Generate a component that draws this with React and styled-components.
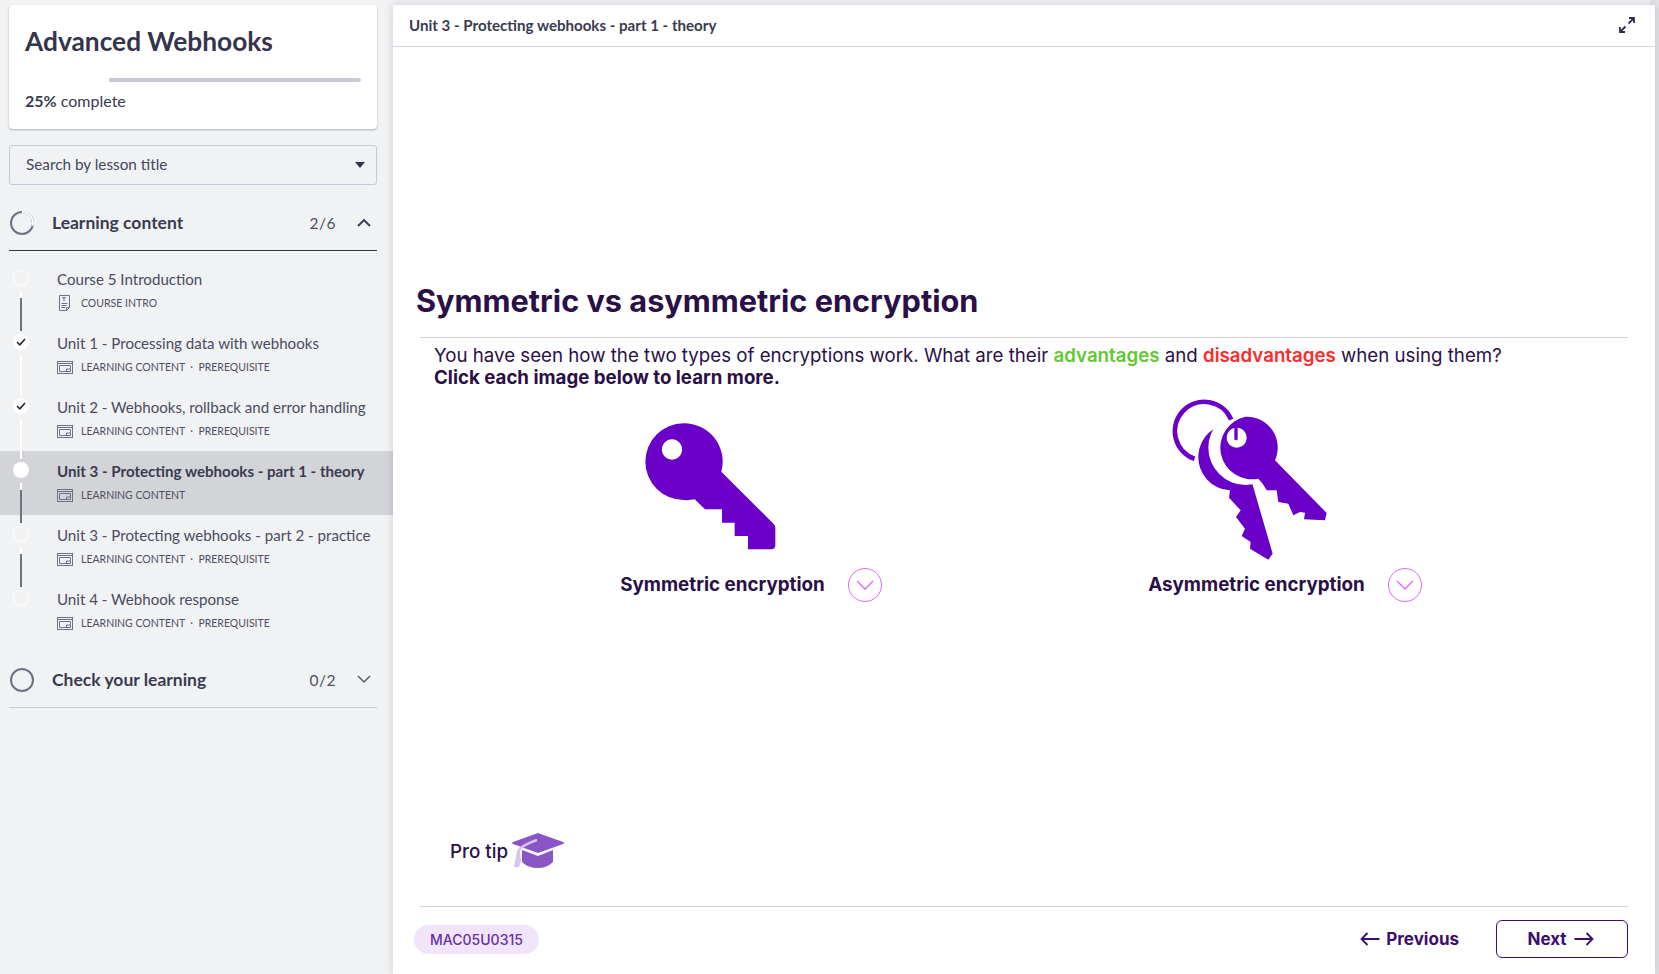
import React from "react";
import styled, { createGlobalStyle } from "styled-components";

const Global = createGlobalStyle`
  html, body { margin: 0; padding: 0; height: 100%; overflow: hidden; background: #e2e3e6; }
  #root { height: 100%; }
  * { box-sizing: border-box; }
`;

const SIDE = `Lato, "Noto Sans", sans-serif`;
const MAIN = `Inter, "Liberation Sans", sans-serif`;

const Page = styled.div`
  display: flex;
  height: 974px;
  width: 1659px;
  padding-right: 4px;
  background: linear-gradient(90deg, #f1f2f4 0, #f1f2f4 1650px, #e2e3e6 1650px);
  font-family: ${SIDE};
  color: #3a3b50;
`;

const Sidebar = styled.aside`
  width: 393px;
  flex: none;
  padding-top: 5px;
`;

const CourseCard = styled.section`
  margin: 0 16px 16px 9px;
  height: 124px;
  background: #fff;
  border-radius: 4px;
  box-shadow: 0 1px 2px rgba(40, 42, 70, 0.35);
  padding: 17px 16px 0;
`;

const CourseTitle = styled.h1`
  margin: 0;
  font-size: 26.3px;
  line-height: 38px;
  font-weight: 700;
  color: #34354c;
`;

const Progress = styled.div`
  margin-top: 18px;
  height: 4px;
  border-radius: 2px;
  background: linear-gradient(90deg, #fff 25%, #c7c9d6 25%);
`;

const ProgressLabel = styled.div`
  margin-top: 8px;
  font-size: 16px;
  line-height: 22px;
  b { font-weight: 700; }
`;

const SearchBox = styled.div`
  margin: 0 16px 10px 9px;
  height: 40px;
  border: 1px solid #c7c9d6;
  border-radius: 3px;
  display: flex;
  align-items: center;
  justify-content: space-between;
  padding: 0 11px 2px 16px;
  font-size: 15.3px;
  color: #45465a;
`;

const Caret = styled.span`
  width: 0;
  height: 0;
  margin-top: 2px;
  border-left: 5.5px solid transparent;
  border-right: 5.5px solid transparent;
  border-top: 6px solid #34354b;
`;

const SectionHeader = styled.div`
  margin: 0 16px 0 9px;
  height: 56px;
  display: flex;
  align-items: center;
  border-bottom: 1px solid ${(p) => (p.$open ? "#34354b" : "#c7c9d6")};
  padding-right: 6px;
`;

const SectionRing = styled.svg`
  width: 26px;
  height: 26px;
  flex: none;
`;

const SectionTitle = styled.span`
  margin-left: 17px;
  flex: 1;
  font-size: 17.5px;
  font-weight: 700;
  color: #3a3b50;
`;

const SectionCount = styled.span`
  font-size: 15.5px;
  letter-spacing: 0.5px;
  color: #4f5062;
  margin-right: 21px;
`;

const Chevron = styled.svg`
  width: 14px;
  height: 9px;
  flex: none;
`;

const LessonList = styled.div`
  padding-top: 8px;
  padding-bottom: 9px;
`;

const LessonRow = styled.div`
  height: 64px;
  display: flex;
  padding-left: 13px;
  background: ${(p) => (p.$active ? "#d3d4d8" : "transparent")};
`;

const Rail = styled.div`
  width: 16px;
  flex: none;
  display: flex;
  flex-direction: column;
  align-items: center;
  padding-top: 11px;
  position: relative;
  z-index: 1;
`;

const Dot = styled.span`
  width: 16px;
  height: 16px;
  border-radius: 50%;
  flex: none;
  background: ${(p) => (p.$solid ? "#fff" : "transparent")};
  border: ${(p) => (p.$solid ? "none" : "1px solid #fff")};
  display: flex;
  align-items: center;
  justify-content: center;
`;

const Connector = styled.span`
  width: 2px;
  height: 40px;
  margin-top: 5px;
  flex: none;
  background: ${(p) =>
    p.$done ? "#fff" : "linear-gradient(#fff 0, #fff 7px, #6f7084 7px)"};
`;

const LessonBody = styled.div`
  margin-left: 28px;
  padding-top: 9px;
  min-width: 0;
`;

const LessonTitle = styled.div`
  font-size: 15.1px;
  line-height: 22px;
  white-space: nowrap;
  font-weight: ${(p) => (p.$active ? 700 : 400)};
  color: ${(p) => (p.$active ? "#3a3b50" : "#4a4b60")};
`;

const LessonMeta = styled.div`
  margin-top: 5px;
  display: flex;
  align-items: center;
  gap: 8px;
  font-size: 10.5px;
  line-height: 16px;
  color: #4f5062;
  white-space: pre;
`;

const Main = styled.main`
  flex: 1;
  margin-top: 5px;
  background: #fff;
  box-shadow: 0 0 8px rgba(40, 42, 70, 0.18);
  display: flex;
  flex-direction: column;
  min-width: 0;
`;

const TopBar = styled.header`
  height: 42px;
  flex: none;
  display: flex;
  align-items: center;
  justify-content: space-between;
  padding: 0 20px 2px 16px;
  border-bottom: 1px solid #d3d4da;
  font-size: 15.1px;
  font-weight: 700;
  color: #3a3b50;
`;

const Content = styled.div`
  flex: 1;
  display: flex;
  flex-direction: column;
  padding: 234px 27px 0 23px;
  font-family: ${MAIN};
  color: #2a1047;
`;

const Heading = styled.h2`
  margin: 0;
  font-size: 30.7px;
  line-height: 40px;
  font-weight: 700;
  white-space: nowrap;
`;

const Rule = styled.hr`
  margin: ${(p) => p.$margin || "0"};
  border: 0;
  border-top: 1px solid #d5cfd3;
  height: 0;
`;

const Intro = styled.p`
  margin: 0 0 0 18px;
  font-size: 18.7px;
  line-height: 22px;
  white-space: nowrap;
  b { font-weight: 700; }
`;

const Good = styled.span`
  color: #5fc92e;
  font-weight: 600;
`;

const Bad = styled.span`
  color: #ff2a2a;
  font-weight: 600;
`;

const Choices = styled.div`
  width: 1068px;
  margin: 8px auto 0 68px;
  display: grid;
  grid-template-columns: 1fr 1fr;
  align-items: end;
`;

const Choice = styled.div`
  display: flex;
  flex-direction: column;
  align-items: center;
`;

const KeyArt = styled.svg`
  display: block;
  width: ${(p) => p.$w}px;
  height: ${(p) => p.$h}px;
  margin-right: ${(p) => p.$shift}px;
  margin-bottom: ${(p) => p.$below}px;
`;

const Caption = styled.div`
  display: flex;
  align-items: center;
  gap: 23px;
  height: 34px;
`;

const CaptionText = styled.span`
  font-size: 18.8px;
  font-weight: 700;
  position: relative;
  top: -1px;
`;

const RoundToggle = styled.span`
  width: 34px;
  height: 34px;
  border-radius: 50%;
  border: 1.5px solid #e066ff;
  display: flex;
  align-items: center;
  justify-content: center;
`;

const ProTip = styled.div`
  margin: auto 0 37px 34px;
  height: 36px;
  display: flex;
  align-items: center;
  gap: 4px;
  font-size: 18.8px;
  font-weight: 500;
`;

const Footer = styled.footer`
  flex: none;
  height: 68px;
  display: flex;
  flex-direction: column;
  font-family: ${MAIN};
  padding-right: 27px;
`;

const FooterRow = styled.div`
  display: flex;
  align-items: center;
  justify-content: space-between;
  padding: 13px 0 0 21px;
`;

const CodePill = styled.span`
  height: 29px;
  width: 125px;
  border-radius: 15px;
  background: #f0e5fb;
  color: #6a2ea5;
  font-size: 14px;
  font-weight: 500;
  display: flex;
  align-items: center;
  justify-content: center;
`;

const Nav = styled.div`
  display: flex;
  align-items: center;
  gap: 37px;
`;

const NavButton = styled.button`
  height: 38px;
  width: ${(p) => (p.$outlined ? "132px" : "auto")};
  padding: ${(p) => (p.$outlined ? "0 3px 0 0" : "0")};
  background: transparent;
  border: ${(p) => (p.$outlined ? "1.5px solid #3d0e6f" : "none")};
  border-radius: 6px;
  display: flex;
  align-items: center;
  justify-content: center;
  gap: ${(p) => (p.$outlined ? "7px" : "6px")};
  color: #3d0e6f;
  font-family: ${MAIN};
  font-size: 17px;
  font-weight: 700;
`;

const ArrowLine = ({ dir }) => (
  <svg width="20" height="14" viewBox="0 0 20 14" fill="none" stroke="#3d0e6f" strokeWidth="1.8">
    {dir === "left" ? <path d="M19.5 7H1.5M7.5 1L1.5 7l6 6" /> : <path d="M.5 7h18M12.5 1l6 6-6 6" />}
  </svg>
);

const WindowIcon = () => (
  <svg width="16" height="13" viewBox="0 0 16 13" fill="none" stroke="#6f7084" strokeWidth="1">
    <rect x=".5" y=".5" width="15" height="12" />
    <path d="M.5 2.5h15" />
    <path d="M2.5 4.5h11v6h-11z" />
    <path d="M9.5 10.5v-2.5h4" />
  </svg>
);

const DocIcon = () => (
  <svg width="16" height="16" viewBox="0 0 16 16" fill="none" stroke="#6f7084" strokeWidth="1">
    <path d="M2.5.5h10v12l-3 3h-7z" />
    <path d="M9.5 15.5v-3h3" />
    <path d="M5 2.7h4M7 2.7v3.6M4.500 8.500h6M4.500 10.500h5M4.500 12.500h3.500" />
  </svg>
);

const Check = () => (
  <svg width="10" height="8" viewBox="0 0 10 8" fill="none" stroke="#23243a" strokeWidth="1.6">
    <path d="M1 4l2.800 2.800L9 1" />
  </svg>
);

const lessons = [
  { title: "Course 5 Introduction", kind: "COURSE INTRO", doc: true },
  { title: "Unit 1 - Processing data with webhooks", kind: "LEARNING CONTENT  ·  PREREQUISITE", check: true, done: true },
  { title: "Unit 2 - Webhooks, rollback and error handling", kind: "LEARNING CONTENT  ·  PREREQUISITE", check: true, done: true },
  { title: "Unit 3 - Protecting webhooks - part 1 - theory", kind: "LEARNING CONTENT", active: true },
  { title: "Unit 3 - Protecting webhooks - part 2 - practice", kind: "LEARNING CONTENT  ·  PREREQUISITE" },
  { title: "Unit 4 - Webhook response", kind: "LEARNING CONTENT  ·  PREREQUISITE", last: true },
];

const Lesson = ({ l }) => (
  <LessonRow $active={l.active}>
    <Rail>
      <Dot $solid={l.check || l.active}>{l.check && <Check />}</Dot>
      {!l.last && <Connector $done={l.done} />}
    </Rail>
    <LessonBody>
      <LessonTitle $active={l.active}>{l.title}</LessonTitle>
      <LessonMeta>
        {l.doc ? <DocIcon /> : <WindowIcon />}
        <span>{l.kind}</span>
      </LessonMeta>
    </LessonBody>
  </LessonRow>
);

const ToggleChevron = () => (
  <svg width="18" height="10" viewBox="0 0 18 10" fill="none" stroke="#e066ff" strokeWidth="1.3">
    <path d="M1 1l8 8 8-8" />
  </svg>
);

export default function App() {
  return (
    <Page>
      <Global />
      <Sidebar>
        <CourseCard>
          <CourseTitle>Advanced Webhooks</CourseTitle>
          <Progress />
          <ProgressLabel>
            <b>25%</b> complete
          </ProgressLabel>
        </CourseCard>
        <SearchBox>
          Search by lesson title
          <Caret />
        </SearchBox>
        <SectionHeader $open>
          <SectionRing viewBox="0 0 26 26" fill="none" strokeWidth="2">
            <circle cx="13" cy="13" r="11" stroke="#6f7084" />
            <path d="M13 2a11 11 0 0 1 10.500 14" stroke="#fff" />
          </SectionRing>
          <SectionTitle>Learning content</SectionTitle>
          <SectionCount>2/6</SectionCount>
          <Chevron viewBox="0 0 14 9" fill="none" stroke="#34354b" strokeWidth="1.8">
            <path d="M1 8l6-6 6 6" />
          </Chevron>
        </SectionHeader>
        <LessonList>
          {lessons.map((l) => (
            <Lesson key={l.title} l={l} />
          ))}
        </LessonList>
        <SectionHeader>
          <SectionRing viewBox="0 0 26 26" fill="none" strokeWidth="2">
            <circle cx="13" cy="13" r="11" stroke="#6f7084" />
          </SectionRing>
          <SectionTitle>Check your learning</SectionTitle>
          <SectionCount>0/2</SectionCount>
          <Chevron viewBox="0 0 14 9" fill="none" stroke="#5a5b6e" strokeWidth="1.5">
            <path d="M1 1l6 6 6-6" />
          </Chevron>
        </SectionHeader>
      </Sidebar>
      <Main>
        <TopBar>
          <span>Unit 3 - Protecting webhooks - part 1 - theory</span>
          <svg width="16" height="16" viewBox="0 0 16 16" fill="none" stroke="#2d2f55" strokeWidth="1.800">
            <path d="M10 1h5v5M15 1L9.500 6.500M6 15H1v-5M1 15l5.500-5.500" />
          </svg>
        </TopBar>
        <Content>
          <Heading>Symmetric vs asymmetric encryption</Heading>
          <Rule $margin="16px 0 7px 4px" />
          <Intro>
            You have seen how the two types of encryptions work. What are their <Good>advantages</Good> and{" "}
            <Bad>disadvantages</Bad> when using them?
            <br />
            <b>Click each image below to learn more.</b>
          </Intro>
          <Choices>
            <Choice>
              <KeyArt $w={136.67} $h={133.33} $shift={79} $below={15} viewBox="130 60 410 400">
                <path
                  fill="#6a00c8"
                  fillRule="evenodd"
                  d="M252 70a115 115 0 0 1 113 145L520 370q7 7 7 14v52q0 12-12 12H445V408H405V368H367V328H316L285 298a115 115 0 0 1-33 2a115 115 0 0 1 0-230zM217 118a30.500 30.500 0 1 0 .01 0z"
                />
              </KeyArt>
              <Caption>
                <CaptionText>Symmetric encryption</CaptionText>
                <RoundToggle>
                  <ToggleChevron />
                </RoundToggle>
              </Caption>
            </Choice>
            <Choice>
              <KeyArt $w={160} $h={165} $shift={70} $below={6} viewBox="120 35 480 495">
                <path
                  fill="#6a00c8"
                  d="M310 115a100 100 0 0 0-10 200l-3 22 35 38-14 20 27 35-10 22 27 18-2 20 55 33 13-18-58-199z"
                />
                <circle cx="347" cy="187" r="112" fill="#fff" />
                <path fill="#fff" d="M370 300l30-10 100 110-100-20z" />
                <path
                  fill="#6a00c8"
                  fillRule="evenodd"
                  d="M347 94a93 93 0 0 1 88 131L590 383l-5 22-63-3 3-20-15-2-20 10-15-35-30-5-5-35h-30l-12-20-13-15a93 93 0 1 1-38-186zM320 127a30 30 0 1 0 .01 0z"
                />
                <rect x="313" y="125" width="10" height="40" rx="5" fill="#6a00c8" />
                <path fill="none" stroke="#6a00c8" strokeWidth="14" d="M193.600 220.400A88 88 0 1 1 303.600 102.700" />
              </KeyArt>
              <Caption>
                <CaptionText>Asymmetric encryption</CaptionText>
                <RoundToggle>
                  <ToggleChevron />
                </RoundToggle>
              </Caption>
            </Choice>
          </Choices>
          <ProTip>
            Pro tip
            <svg width="52" height="36" viewBox="0 0 52 36">
              <path fill="#8a55c4" d="M26 0l25 9q2 1 0 2L26 20 1 11q-2-1 0-2z" />
              <path fill="#8a55c4" d="M10 17l16 6 15-6v12q-6 6-15 6-10 0-16-6z" />
              <path fill="none" stroke="#d8c4ec" strokeWidth="2.500" d="M25 7Q10 12 6 18" />
              <path fill="#d8c4ec" d="M5 18l3 0 1 10-2 6-5 0z" />
            </svg>
          </ProTip>
        </Content>
        <Footer>
          <Rule $margin="0 0 0 27px" />
          <FooterRow>
            <CodePill>MAC05U0315</CodePill>
            <Nav>
              <NavButton>
                <ArrowLine dir="left" />
                Previous
              </NavButton>
              <NavButton $outlined>
                Next
                <ArrowLine dir="right" />
              </NavButton>
            </Nav>
          </FooterRow>
        </Footer>
      </Main>
    </Page>
  );
}
